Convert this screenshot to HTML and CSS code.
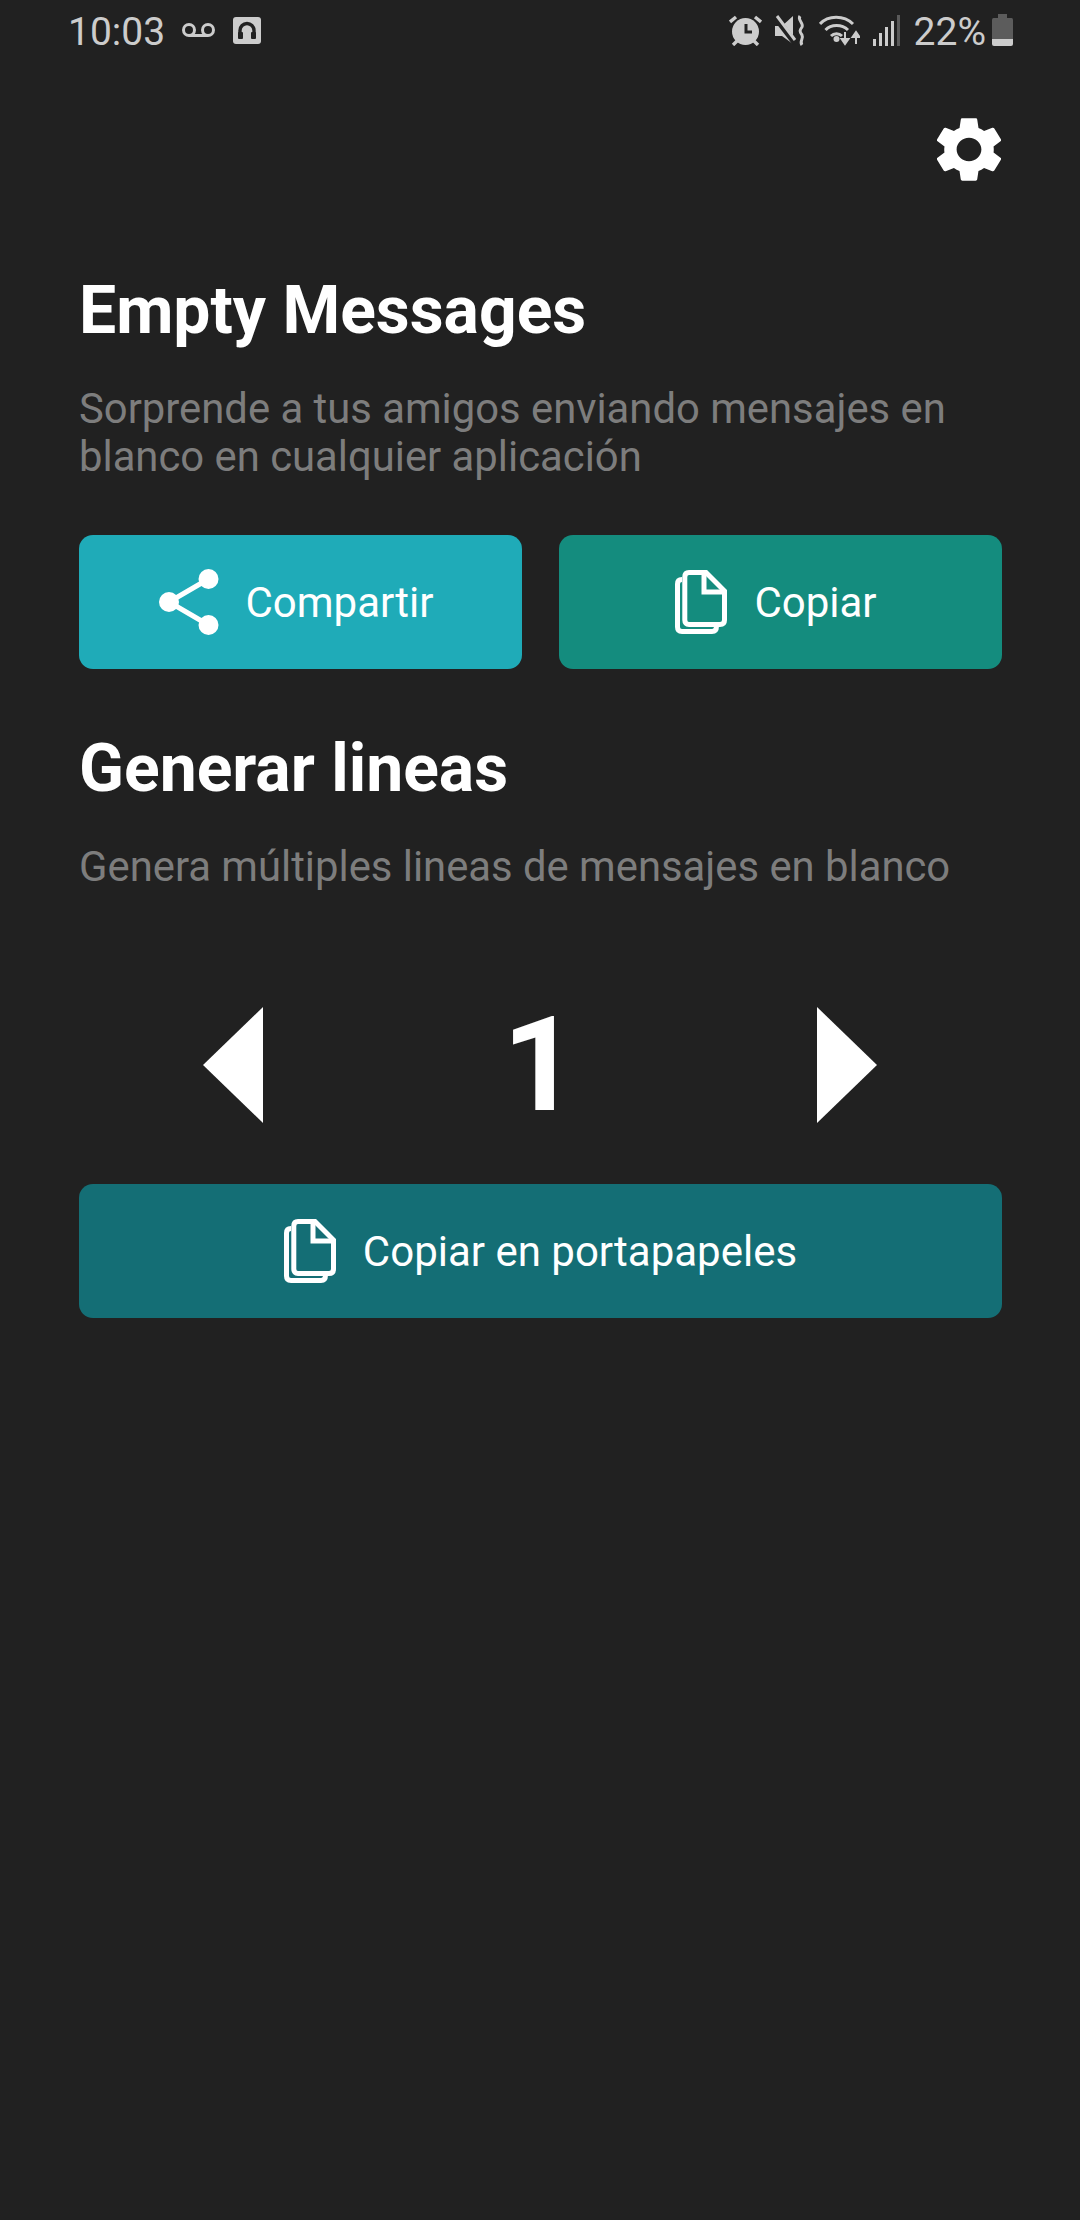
FILE: index.html
```html
<!DOCTYPE html>
<html lang="es">

<head>
  <meta charset="UTF-8">
  <title>Empty Messages</title>
  <link rel="stylesheet" href="styles.css">
</head>

<body>
  <div class="status-bar">
    <span class="status-time">10:03</span>
    <svg class="icon-voicemail" width="33" height="14" viewBox="0 0 33 14">
      <circle cx="7" cy="7" r="5.5" />
      <circle cx="26" cy="7" r="5.5" />
      <path d="M7 12.5H26" />
    </svg>
    <svg class="icon-headset" width="28" height="27" viewBox="0 0 28 27">
      <rect width="28" height="27" rx="3" fill="#ccc" />
      <path d="M7 21V13.5a7 7 0 0 1 14 0V21" fill="none" stroke="#212121" stroke-width="3.4" />
      <rect x="5" y="15" width="5" height="7" rx="1" fill="#212121" />
      <rect x="18" y="15" width="5" height="7" rx="1" fill="#212121" />
    </svg>
    <div class="status-right">
      <svg class="icon-alarm" width="33" height="31" viewBox="0 0 33 31">
        <circle cx="16.500" cy="16.500" r="13.500" fill="#ccc" />
        <path d="M1 7L7 2M32 7L26 2M4 30L8 26M29 30L25 26" stroke="#ccc" stroke-width="3.4" fill="none" />
        <path d="M17 9V17H23" stroke="#212121" stroke-width="3" fill="none" />
      </svg>
      <svg class="icon-mute" width="31" height="31" viewBox="0 0 31 31">
        <path d="M0 11H7L18 1V29L7 21H0Z" fill="#ccc" />
        <path d="M1 3L20 28" stroke="#212121" stroke-width="6" />
        <path d="M2 1L20 25" stroke="#ccc" stroke-width="3" />
        <path d="M25 1C22 5 29 8 27 12C25 15 24 16 27 20C29 24 24 26 27 30" stroke="#ccc" stroke-width="3" fill="none" />
      </svg>
      <svg class="icon-wifi" width="41" height="32" viewBox="0 0 41 32">
        <path d="M1 10C9 1 25 1 34 10M6.500 16C12 10 23 10 29 16M12 22C15 19 20 19 23 22" stroke="#ccc" stroke-width="3" fill="none" />
        <circle cx="17.500" cy="25" r="3" fill="#ccc" />
        <path d="M26 18V28M22.500 25L26 30L29.500 25Z" stroke="#ccc" stroke-width="2" fill="#ccc" />
        <path d="M37 30V20M33.500 23L37 18L40.500 23Z" stroke="#ccc" stroke-width="2" fill="#ccc" />
      </svg>
      <svg class="icon-signal" width="27" height="31" viewBox="0 0 27 31">
        <rect x="0" y="24" width="3" height="7" fill="#ccc" />
        <rect x="6" y="18" width="3" height="13" fill="#ccc" />
        <rect x="12" y="12" width="3" height="19" fill="#ccc" />
        <rect x="18" y="6" width="3" height="25" fill="#ccc" />
        <rect x="24" y="0" width="3" height="31" fill="#5a5a5a" />
      </svg>
      <span class="status-battery-text">22%</span>
      <svg class="icon-battery" width="21" height="32" viewBox="0 0 21 32">
        <path d="M6 0H15V4H19.500Q21 4 21 6V25H0V6Q0 4 1.500 4H6Z" fill="#5c5c5c" />
        <path d="M0 25H21V30Q21 32 19 32H2Q0 32 0 30Z" fill="#ccc" />
      </svg>
    </div>
  </div>

  <div class="toolbar">
    <svg class="icon-settings" width="64" height="65" viewBox="2.700 2 18.600 20" preserveAspectRatio="none" fill="#fff">
      <path d="M19.140 12.940c.04-.3.06-.61.06-.94 0-.32-.02-.64-.07-.94l2.030-1.580c.18-.14.23-.41.12-.61l-1.920-3.320c-.12-.22-.37-.29-.59-.22l-2.390.96c-.5-.38-1.030-.7-1.620-.94l-.36-2.540c-.04-.24-.24-.41-.48-.41h-3.840c-.24 0-.43.17-.47.41l-.36 2.540c-.59.24-1.130.57-1.620.94l-2.390-.96c-.22-.08-.47 0-.59.22L2.740 8.870c-.12.21-.08.47.12.61l2.030 1.580c-.05.3-.09.63-.09.94s.02.64.07.94l-2.030 1.580c-.18.14-.23.41-.12.61l1.920 3.320c.12.22.37.29.59.22l2.390-.96c.5.38 1.030.7 1.620.94l.36 2.540c.05.24.24.41.48.41h3.840c.24 0 .44-.17.47-.41l.36-2.540c.59-.24 1.130-.56 1.620-.94l2.390.96c.22.08.47 0 .59-.22l1.920-3.320c.12-.22.07-.47-.12-.61l-2.010-1.580zM12 15.600c-1.980 0-3.600-1.620-3.600-3.600s1.620-3.600 3.600-3.600 3.600 1.620 3.600 3.600-1.620 3.600-3.600 3.600z" />
    </svg>
  </div>

  <div class="content">
    <h1 class="title">Empty Messages</h1>
    <p class="subtitle">Sorprende a tus amigos enviando mensajes en blanco en cualquier aplicación</p>

    <div class="button-row">
      <button class="action-button button-share">
        <svg width="60" height="66" viewBox="0 0 60 66" fill="#fff">
          <circle cx="49.500" cy="10" r="10" />
          <circle cx="10" cy="33" r="10" />
          <circle cx="49.500" cy="56" r="10" />
          <path d="M49.500 10L10 33L49.500 56" fill="none" stroke="#fff" stroke-width="5" />
        </svg>
        <span>Compartir</span>
      </button>
      <button class="action-button button-copy">
        <svg width="52" height="64" viewBox="0 0 52 64" fill="none" stroke="#fff" stroke-width="5">
          <path d="M14 2.500H31L49.500 21V50Q49.500 54.500 45 54.500H14Q9.800 54.500 9.800 50V7Q9.800 2.500 14 2.500Z" />
          <path d="M29 2.500V22H49.500" />
          <path d="M7 9.500Q2.500 9.500 2.500 14V57Q2.500 61.500 7 61.500H37Q41.500 61.500 41.500 56" />
        </svg>
        <span>Copiar</span>
      </button>
    </div>

    <h2 class="title title-lines">Generar lineas</h2>
    <p class="subtitle">Genera múltiples lineas de mensajes en blanco</p>

    <div class="stepper">
      <div class="arrow arrow-left"></div>
      <span class="stepper-value">1</span>
      <div class="arrow arrow-right"></div>
    </div>

    <button class="action-button button-clipboard">
      <svg width="52" height="64" viewBox="0 0 52 64" fill="none" stroke="#fff" stroke-width="5">
        <path d="M14 2.500H31L49.500 21V50Q49.500 54.500 45 54.500H14Q9.800 54.500 9.800 50V7Q9.800 2.500 14 2.500Z" />
        <path d="M29 2.500V22H49.500" />
        <path d="M7 9.500Q2.500 9.500 2.500 14V57Q2.500 61.500 7 61.500H37Q41.500 61.500 41.500 56" />
      </svg>
      <span>Copiar en portapapeles</span>
    </button>
  </div>
</body>

</html>
```

FILE: styles.css
```css
* {
  box-sizing: border-box;
}

html,
body {
  margin: 0;
  padding: 0;
}

body {
  width: 1080px;
  height: 2220px;
  overflow: hidden;
  background: #212121;
  font-family: Roboto, "Liberation Sans", sans-serif;
  color: #ffffff;
}

/* barra de estado */
.status-bar {
  height: 60px;
  padding: 0 67px 0 68px;
  display: flex;
  align-items: center;
  color: #cccccc;
}

.status-time {
  font-size: 39px;
  line-height: 60px;
  margin-top: 3px;
}

.icon-voicemail {
  margin: 0 0 0 17px;
  fill: none;
  stroke: #cccccc;
  stroke-width: 3;
}

.icon-headset {
  margin-left: 18px;
}

.status-right {
  margin-left: auto;
  display: flex;
  align-items: center;
}

.icon-alarm {
  margin-right: 13px;
}

.icon-mute {
  margin-right: 13px;
}

.icon-wifi {
  margin-right: 13px;
}

.icon-signal {
  margin-right: 14px;
}

.status-battery-text {
  font-size: 39px;
  line-height: 60px;
  margin-top: 3px;
  margin-right: 6px;
}

.toolbar {
  height: 128px;
  padding: 57px 79px 0 0;
  display: flex;
  justify-content: flex-end;
}

/* contenido */
.content {
  padding: 88px 78px 0 79px;
}

.title {
  margin: 0;
  font-size: 66px;
  line-height: 70px;
  font-weight: 700;
}

.subtitle {
  margin: 39px 0 0 0;
  font-size: 41.800px;
  line-height: 48px;
  color: #7d7d7d;
}

.button-row {
  margin-top: 54px;
  display: flex;
  gap: 37px;
}

.action-button {
  height: 134px;
  border: 0;
  border-radius: 14px;
  padding: 0;
  display: flex;
  align-items: center;
  justify-content: center;
  gap: 27px;
  font-family: inherit;
  font-size: 42px;
  color: #ffffff;
}

.button-row .action-button {
  width: 443px;
  padding-right: 9px;
}

.button-share {
  background: #1fabb8;
}

.button-copy {
  background: #148c7e;
}

.button-clipboard {
  width: 100%;
  margin-top: 61px;
  background: #146e75;
}

.title-lines {
  margin-top: 65px;
}

.stepper {
  margin-top: 116px;
  height: 116px;
  padding: 0 125px 0 124px;
  display: flex;
  align-items: center;
  justify-content: space-between;
}

.arrow {
  width: 0;
  height: 0;
  border-top: 58px solid transparent;
  border-bottom: 58px solid transparent;
}

.arrow-left {
  border-right: 60px solid #ffffff;
}

.arrow-right {
  border-left: 60px solid #ffffff;
}

.stepper-value {
  font-size: 132px;
  line-height: 116px;
  font-weight: 700;
}
```
